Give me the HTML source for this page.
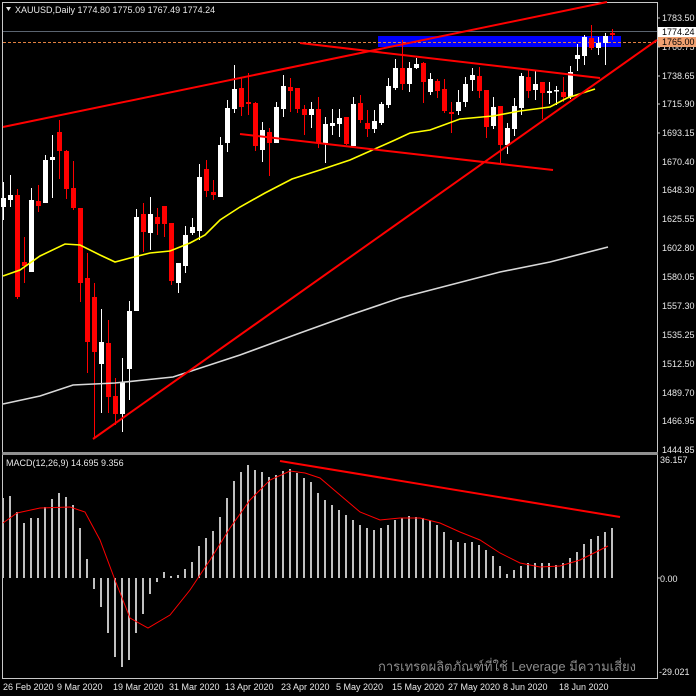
<!DOCTYPE html>
<html><head><meta charset="utf-8"><style>
html,body{margin:0;padding:0;background:#000;width:696px;height:696px;overflow:hidden}
svg{display:block}
text{font-family:"Liberation Sans",sans-serif;font-size:9px;fill:#e8e8e8}
</style></head><body>
<svg id="s" width="696" height="696" viewBox="0 0 696 696" xmlns="http://www.w3.org/2000/svg">
<rect width="696" height="696" fill="#000"/>
<!-- frames -->
<line x1="2.5" y1="2" x2="2.5" y2="679" stroke="#c8c8c8" stroke-width="1"/>
<line x1="657.5" y1="2" x2="657.5" y2="679" stroke="#c8c8c8" stroke-width="1"/>
<line x1="2" y1="2.5" x2="658" y2="2.5" stroke="#c8c8c8" stroke-width="1"/>
<line x1="2" y1="678.5" x2="658" y2="678.5" stroke="#c8c8c8" stroke-width="1"/>
<rect x="2" y="452" width="656" height="3" fill="#909090"/>
<!-- blue zone -->
<rect x="378" y="36" width="243" height="11" fill="#0000ff"/>
<line x1="3" y1="31.5" x2="657" y2="31.5" stroke="#5a6470" stroke-width="1"/>
<line x1="3" y1="42.5" x2="657" y2="42.5" stroke="#e08040" stroke-width="1" stroke-dasharray="3,2"/>
<g id="cand"></g>
<!-- MAs -->
<polyline fill="none" stroke="#d8d8d8" stroke-width="1.6" points="3,404 40,396 73,385 115,383 173,377 240,355 300,333 350,315 400,298 450,285 500,272 550,262 608,247"/>
<polyline fill="none" stroke="#ffff00" stroke-width="1.6" points="3,276 20,270 40,256 65,244 80,245 100,255 115,262 130,258 150,253 170,251 190,243 205,235 220,220 240,207 265,193 292,179 320,170 350,160 377,148 395,140 410,133 430,130 460,119 493,116 520,111 550,107 567,98 595,89"/>
<!-- trend lines -->
<g stroke="#ff0000" stroke-width="2" fill="none">
<line x1="3" y1="127" x2="607" y2="2"/>
<line x1="300" y1="43" x2="600" y2="78"/>
<line x1="240" y1="134" x2="553" y2="170"/>
<line x1="93" y1="439" x2="657" y2="40"/>
<line x1="280" y1="461" x2="620" y2="517"/>
</g>
<g id="macd"></g>
<polyline fill="none" stroke="#ff0000" stroke-width="1" points="3,523 17,513 40,508 70,507 85,512 100,540 115,580 130,618 148,628 170,615 190,590 210,560 230,528 250,500 270,480 290,471 305,473 320,478 340,495 360,512 380,520 400,518 420,518 440,523 460,532 480,540 500,553 520,563 540,567 560,566 580,560 600,550 608,546"/>
<!-- header -->
<path d="M6,7 L11,7 L8.5,11 Z" fill="#e8e8e8"/>
<text x="15" y="13">XAUUSD,Daily  1774.80 1775.09 1767.49 1774.24</text>
<text x="6" y="466">MACD(12,26,9) 14.695 9.356</text>
<!-- price axis -->
<g>
<text x="662" y="21">1783.50</text>
<text x="662" y="50">1760.75</text>
<text x="662" y="79">1738.65</text>
<text x="662" y="107">1715.90</text>
<text x="662" y="136">1693.15</text>
<text x="662" y="165">1670.40</text>
<text x="662" y="193">1648.30</text>
<text x="662" y="222">1625.55</text>
<text x="662" y="251">1602.80</text>
<text x="662" y="280">1580.05</text>
<text x="662" y="309">1557.30</text>
<text x="662" y="338">1535.25</text>
<text x="662" y="367">1512.50</text>
<text x="662" y="396">1489.70</text>
<text x="662" y="424">1466.95</text>
<text x="662" y="453">1444.85</text>
<text x="660" y="463">36.157</text>
<text x="660" y="582">0.00</text>
<text x="659" y="675">-29.021</text>
</g>
<rect x="658" y="27" width="38" height="10" fill="#ffffff"/>
<text x="662" y="35" style="fill:#000">1774.24</text>
<rect x="658" y="37" width="38" height="10" fill="#f0a070"/>
<text x="662" y="45" style="fill:#000">1765.00</text>
<g stroke="#c8c8c8">
<line x1="657" y1="18" x2="660" y2="18"/><line x1="657" y1="47" x2="660" y2="47"/><line x1="657" y1="76" x2="660" y2="76"/><line x1="657" y1="104" x2="660" y2="104"/><line x1="657" y1="133" x2="660" y2="133"/><line x1="657" y1="578" x2="660" y2="578"/>
</g>
<!-- dates -->
<g>
<text x="3" y="690">26 Feb 2020</text>
<text x="57" y="690">9 Mar 2020</text>
<text x="113" y="690">19 Mar 2020</text>
<text x="169" y="690">31 Mar 2020</text>
<text x="225" y="690">13 Apr 2020</text>
<text x="281" y="690">23 Apr 2020</text>
<text x="336" y="690">5 May 2020</text>
<text x="392" y="690">15 May 2020</text>
<text x="448" y="690">27 May 2020</text>
<text x="503" y="690">8 Jun 2020</text>
<text x="559" y="690">18 Jun 2020</text>
</g>
<text x="378" y="671" style="font-size:13px;fill:#8c8c8c;font-family:'Liberation Sans','DejaVu Sans',sans-serif">การเทรดผลิตภัณฑ์ที่ใช้ Leverage มีความเสี่ยง</text>
</svg>
<script>
var C=[
['w',198,207,182,220],['w',195,200,175,207],['r',195,297,189,299],['r',262,266,237,283],['w',200,272,188,272],['r',201,206,185,212],['w',160,203,155,203],['w',157,160,135,198],['r',132,151,120,179],['r',151,189,150,199],
['r',188,208,161,210],['r',208,283,208,302],['r',278,342,253,373],['r',297,352,283,437],['w',342,364,309,413],['r',343,397,320,413],['r',396,414,378,425],['w',382,414,358,432],['w',311,369,301,400],['w',217,311,209,311],
['r',214,232,203,252],['w',214,233,197,250],['r',217,224,208,235],['r',206,224,206,237],['r',223,281,223,285],['w',263,283,263,293],['w',235,266,226,273],['w',227,233,218,235],['w',177,231,164,240],['r',169,191,160,197],
['r',192,195,180,200],['w',145,197,137,197],['w',108,143,100,152],['w',89,109,65,113],['r',88,107,77,116],['r',102,104,73,115],['r',103,146,102,151],['w',130,150,122,162],['r',132,143,128,176],['w',107,143,102,143],
['w',86,109,75,117],['r',87,91,78,112],['r',88,109,88,113],['r',109,115,105,135],['w',109,115,102,128],['r',109,143,97,148],['w',124,143,117,163],['w',123,126,109,135],['w',118,124,109,137],['r',117,144,117,145],
['w',104,146,97,146],['r',103,120,95,123],['r',123,129,110,137],['w',121,129,110,133],['w',104,123,102,125],['w',86,105,78,108],['w',68,88,59,90],['r',68,84,40,90],['w',68,84,62,92],['w',64,68,58,69],
['r',63,82,62,103],['w',79,92,73,95],['r',81,91,79,98],['r',89,111,79,113],['r',112,114,102,133],['w',102,111,90,115],['w',84,102,77,107],['w',75,80,68,91],['r',76,91,67,98],['r',90,127,90,138],
['w',107,126,97,129],['r',106,145,106,163],['w',128,145,123,154],['w',106,129,98,136],['w',76,108,73,115],['r',77,91,70,98],['w',84,90,71,100],['r',82,93,82,119],['w',91,93,82,104],['w',90,91,86,105],
['r',92,97,77,102],['w',72,97,66,99],['w',55,59,44,71],['w',37,56,35,65],['r',38,48,25,50],['w',43,48,37,55],['w',36,43,33,65],['r',33,35,29,40]];
var h='';
C.forEach(function(c,i){var x=3+7*i;var col=c[0]=='w'?'#ffffff':'#ff0000';
h+='<line x1="'+(x+0.5)+'" y1="'+c[3]+'" x2="'+(x+0.5)+'" y2="'+c[4]+'" stroke="'+col+'" stroke-width="1"/>';
var t=Math.min(c[1],c[2]),b=Math.max(c[1],c[2]);if(b-t<1.5)b=t+1.5;
h+='<rect x="'+(x-2)+'" y="'+t+'" width="5" height="'+(b-t)+'" fill="'+col+'"/>';});
document.getElementById('cand').innerHTML=h;
var M=[498,496,512,523,518,518,507,499,493,497,505,528,559,589,607,633,657,667,660,633,614,594,582,572,576,575,569,562,546,538,531,517,498,481,472,465,470,472,477,475,471,469,473,478,482,493,500,505,510,515,520,525,528,530,528,525,520,518,516,517,518,520,525,532,540,542,543,542,545,550,556,566,574,570,566,563,563,563,563,565,563,558,552,544,539,536,532,528];
var g='';
M.forEach(function(v,i){var x=2+7*i;var t=Math.min(v,578),b=Math.max(v,578);
g+='<rect x="'+x+'" y="'+t+'" width="2" height="'+Math.max(b-t,1)+'" fill="#c0c0c0"/>';});
document.getElementById('macd').innerHTML=g;
</script>
</body></html>
